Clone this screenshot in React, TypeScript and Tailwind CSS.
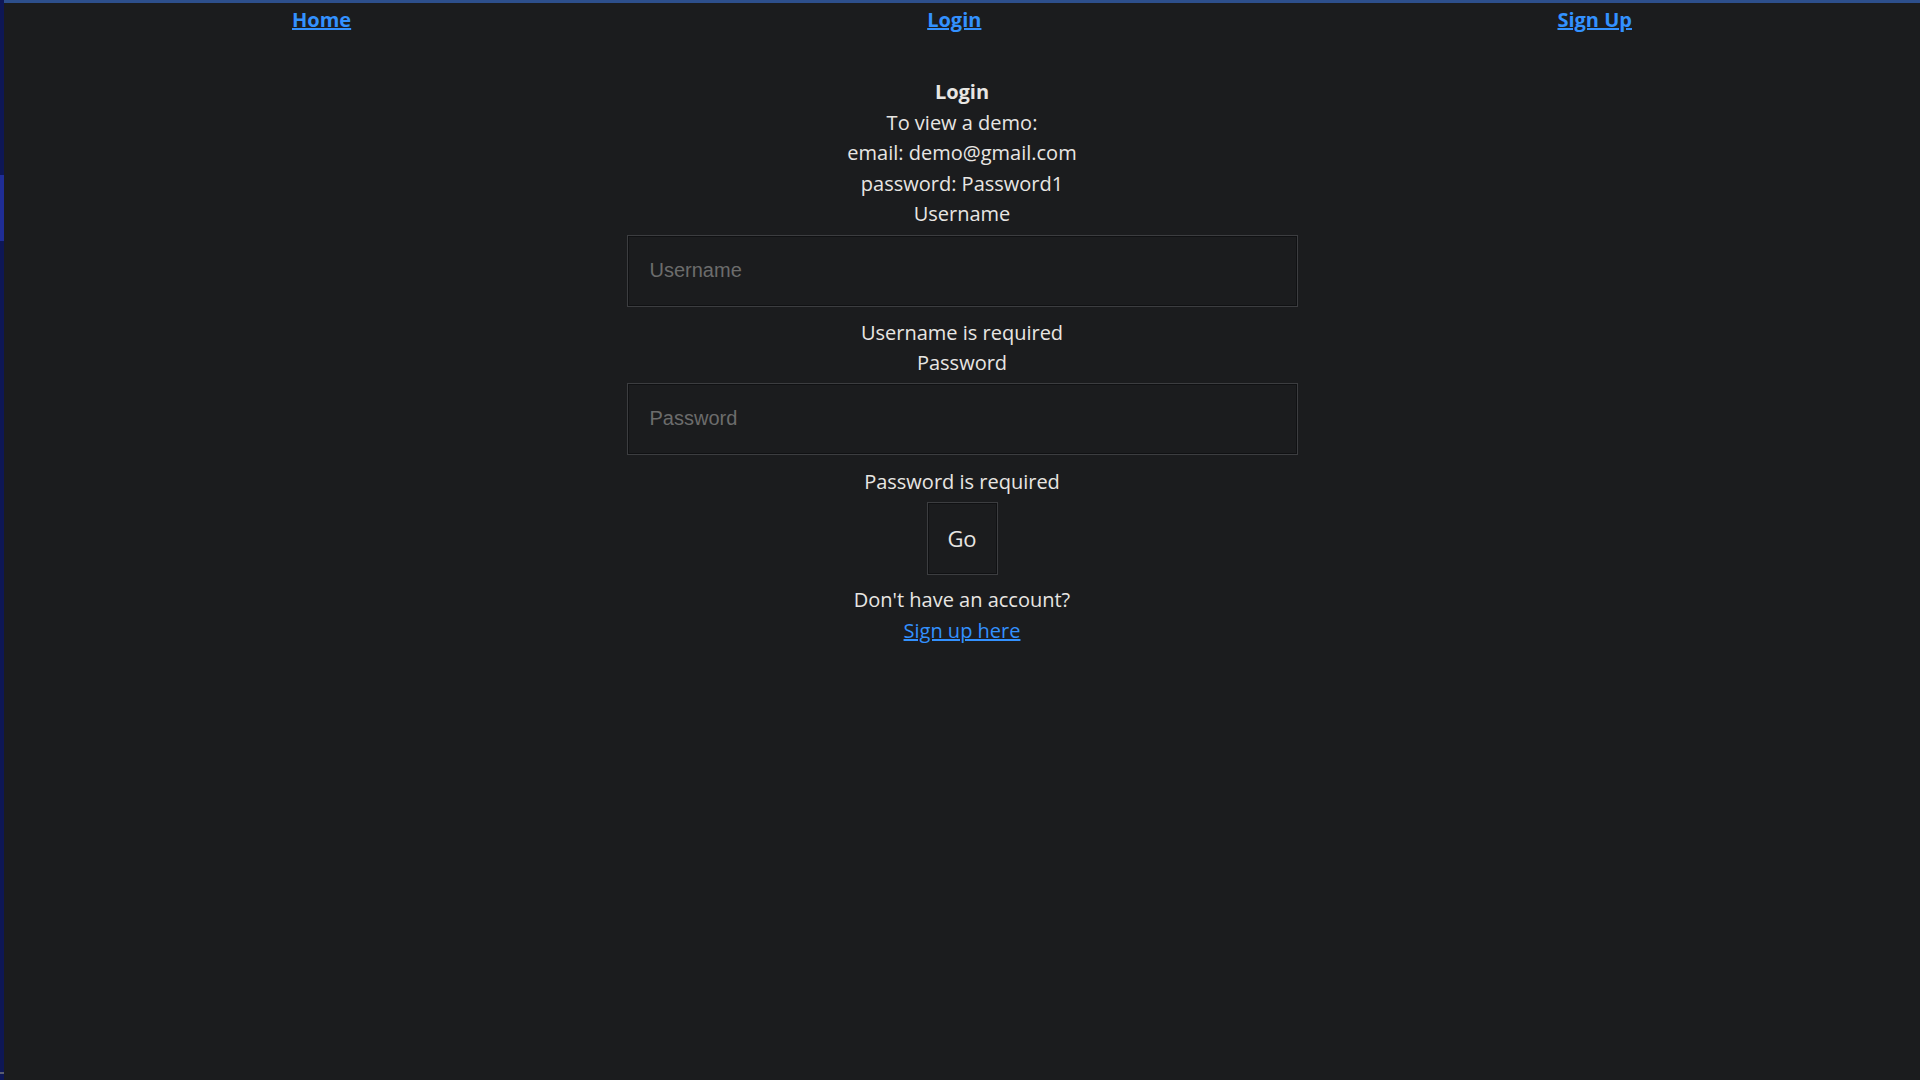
import { useState } from 'react';

const font = { fontFamily: '"Open Sans", "Noto Sans", sans-serif' };

export default function App() {
  const [username, setUsername] = useState('');
  const [password, setPassword] = useState('');

  return (
    <div className="flex min-h-screen bg-[#1b1c1e] text-[#e8e6e3]" style={font}>
      {/* left strip */}
      <div className="flex w-[4px] shrink-0 flex-col bg-[#0e1755]">
        <div className="h-[175px]" />
        <div className="h-[66px] bg-[#1f2d96]" />
        <div className="flex-1" />
        <div className="mb-[6px] h-[2px] bg-[#5a5d70]" />
      </div>

      <div className="flex flex-1 flex-col">
        <div className="h-[3px] bg-[#2d4f8c]" />

        {/* nav */}
        <nav className="flex justify-around pt-[2px] text-[20px] font-bold leading-[30px]">
          <a href="#" className="text-[#3391ff] underline">Home</a>
          <a href="#" className="text-[#3391ff] underline">Login</a>
          <a href="#" className="text-[#3391ff] underline">Sign Up</a>
        </nav>

        {/* login form */}
        <main className="mt-[42px] flex flex-col items-center text-[20px] leading-[30.5px]">
          <h1 className="font-bold">Login</h1>
          <p>To view a demo:</p>
          <p>email: demo@gmail.com</p>
          <p>password: Password1</p>

          <label htmlFor="username">Username</label>
          <input
            id="username"
            value={username}
            onChange={(e) => setUsername(e.target.value)}
            placeholder="Username"
            className="mt-[5px] mb-[11px] h-[72px] w-[671px] border border-[#3c3d40] bg-[#1b1c1e] px-[22px] text-[20px] text-[#e8e6e3] shadow-[inset_0_0_0_1px_#101113] outline-none placeholder:text-[#6c6c6c]"
            style={{ fontFamily: '"Liberation Sans", Arial, sans-serif' }}
          />
          <p>Username is required</p>

          <label htmlFor="password">Password</label>
          <input
            id="password"
            type="password"
            value={password}
            onChange={(e) => setPassword(e.target.value)}
            placeholder="Password"
            className="mt-[4px] mb-[12px] h-[72px] w-[671px] border border-[#3c3d40] bg-[#1b1c1e] px-[22px] text-[20px] text-[#e8e6e3] shadow-[inset_0_0_0_1px_#101113] outline-none placeholder:text-[#6c6c6c]"
            style={{ fontFamily: '"Liberation Sans", Arial, sans-serif' }}
          />
          <p>Password is required</p>

          <button className="mt-[5px] mb-[10px] h-[73px] w-[71px] border border-[#3c3d40] bg-[#1b1c1e] text-[22px] text-[#e8e6e3] shadow-[inset_0_0_0_1px_#101113]">
            Go
          </button>

          <p>Don&apos;t have an account?</p>
          <a href="#" className="text-[#3391ff] underline">Sign up here</a>
        </main>
      </div>
    </div>
  );
}
